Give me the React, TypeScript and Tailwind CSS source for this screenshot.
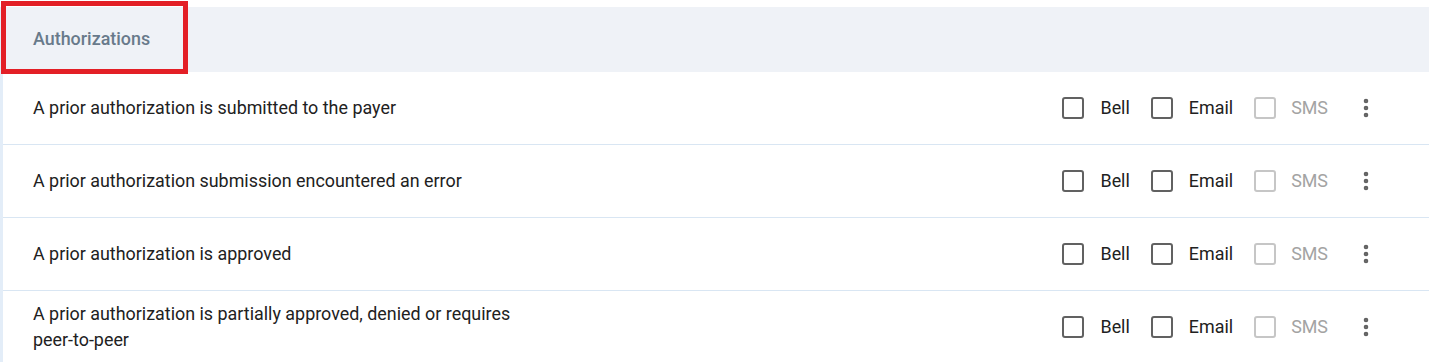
import { EllipsisVertical } from "lucide-react";

const rows = [
  "A prior authorization is submitted to the payer",
  "A prior authorization submission encountered an error",
  "A prior authorization is approved",
  "A prior authorization is partially approved, denied or requires peer-to-peer",
];

function Box({ disabled }: { disabled?: boolean }) {
  return (
    <span
      className={
        "block w-[22px] h-[22px] rounded-[3px] border-2 " +
        (disabled ? "border-[#c6c6c6]" : "border-[#616161]")
      }
    />
  );
}

export default function App() {
  return (
    <div className="relative bg-white pt-[7px] font-['Roboto',sans-serif] text-[17.9px]">
      <div className="border-l-[3px] border-[#e3edf8]">
        <div className="flex h-[65px] items-center bg-[#eff2f7] pl-[30px]">
          <h3 className="font-medium text-[#687a8b]">Authorizations</h3>
        </div>
        {rows.map((r) => (
          <div
            key={r}
            className="flex min-h-[73px] items-center border-b border-[#d9e6f3] pl-[30px] pr-[51px] text-[#212121]"
          >
            <div className="w-[500px] leading-[26px]">{r}</div>
            <div className="ml-auto flex items-center">
              <Box />
              <span className="ml-4">Bell</span>
              <span className="ml-[21px]">
                <Box />
              </span>
              <span className="ml-4">Email</span>
              <span className="ml-[21px]">
                <Box disabled />
              </span>
              <span className="ml-[15px] text-[#a3a3a3]">SMS</span>
              <EllipsisVertical className="ml-[26px] text-[#616161]" size={24} strokeWidth={2.6} />
            </div>
          </div>
        ))}
      </div>
      <div className="absolute left-[1px] top-[1px] h-[73px] w-[187px] border-[5px] border-[#e31f26]" />
    </div>
  );
}
